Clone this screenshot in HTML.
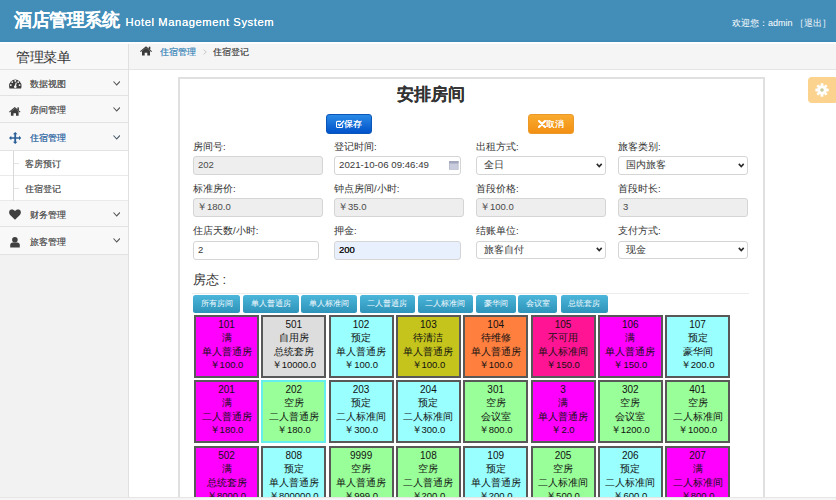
<!DOCTYPE html>
<html><head><meta charset="utf-8">
<style>
*{box-sizing:border-box;margin:0;padding:0}
html,body{width:836px;height:500px;overflow:hidden;background:#fff;font-family:"Liberation Sans",sans-serif;color:#393939}
body div,body span{text-shadow:0 0 0.35px currentColor}
.a{position:absolute;white-space:nowrap}
.hdr{position:absolute;left:0;top:0;width:836px;height:42px;background:#438eb9;color:#fff}
.hdr .t1{position:absolute;left:14px;top:8.6px;font-size:17.5px;letter-spacing:-0.45px;font-weight:bold;line-height:22px}
.hdr .t2{position:absolute;left:125.5px;top:14px;font-size:11.2px;letter-spacing:0.6px;line-height:16px;text-shadow:0 0 0.6px #fff}
.hdr .r{position:absolute;left:732px;top:16.8px;font-size:9px;line-height:12px;text-shadow:none}
.side{position:absolute;left:0;top:42px;width:129px;height:458px;background:#f2f2f2;border-right:1px solid #e0e0e0}
.mtitle{position:absolute;left:0;top:42px;width:128px;height:28px;background:#f8f8f8;border-bottom:1px solid #e2e2e2;font-size:13.5px;letter-spacing:-0.4px;color:#333;line-height:18px;padding-left:16px;padding-top:6.5px;text-shadow:none}
.mi{position:absolute;left:0;width:128px;background:#f8f8f8;border-bottom:1px solid #e2e2e2}
.tx{position:absolute;font-size:9.3px;letter-spacing:0px;line-height:12px;color:#585858;white-space:nowrap}
.ic{position:absolute}
.sub{position:absolute;left:0;width:128px;background:#fff;border-bottom:1px solid #eaeaea}
.bc{position:absolute;left:129px;top:42px;width:707px;height:28px;background:#f5f5f5;border-bottom:1px solid #e5e5e5;font-size:9px;color:#555}
.panel{position:absolute;left:178px;top:77px;width:587px;height:440px;border:2px solid #e0e0e0;background:#fff}
.title{position:absolute;left:397px;top:83px;font-size:16.5px;font-weight:bold;color:#333;line-height:22px}
.btn{position:absolute;height:20px;border-radius:3px;color:#fff;font-size:9.4px;line-height:17px;text-align:center}
.save{left:326px;top:113.5px;width:46px;background:linear-gradient(#2a8ae6,#0052c9);border:1px solid #0a56b8}
.cancel{left:528px;top:113.5px;width:46px;background:linear-gradient(#f9ab2f,#f29014);border:1px solid #eb9a2a}
.lbl{position:absolute;font-size:9.5px;color:#333;line-height:12px;text-shadow:none}
.inp{position:absolute;height:18.5px;border:1px solid #d5d5d5;border-radius:3px;background:#fff;font-size:9.5px;color:#393939;line-height:16.5px;padding-left:4px;text-shadow:none}
.ro{background:#eeeeee;color:#4a4a4a}
.fs{position:absolute;left:193px;top:271px;font-size:13px;color:#333;line-height:17px;text-shadow:none}
.hr{position:absolute;left:192px;top:293px;width:557px;height:1px;background:#ececec}
.fb{position:absolute;top:295.4px;height:17.2px;border-radius:2.5px;background:linear-gradient(#4cb6db,#2e93b8);color:#f4fbff;font-size:8.1px;line-height:17px;text-align:center;text-shadow:none}
.card{position:absolute;width:65px;height:63px;border:2px solid #585858;text-align:center;font-size:9.5px;line-height:13.5px;color:#111;padding-top:0.95px}
.card div{text-shadow:none}
.card div:first-child{font-size:10px}

.botbar{position:absolute;left:0;top:496.5px;width:836px;height:4px;background:linear-gradient(#f3f3f3,#fafafa);border-top:1px solid #e6e6e6}
.gear{position:absolute;left:808px;top:77px;width:30px;height:26px;border-radius:4px;background:#fbd28e}
</style></head><body>
<div class="hdr">
  <div class="t1">酒店管理系统</div>
  <div class="t2">Hotel Management System</div>
  <div class="r">欢迎您：admin ［退出］</div>
</div>
<div class="side"></div>
<div class="mtitle">管理菜单</div>
<div class="mi" style="top:70px;height:26px"></div>
<svg class="ic" style="left:8.8px;top:79.4px" width="13" height="10" viewBox="0 0 13 10"><path d="M0.5 9.4C0.2 8.6 0.1 7.6 0.1 6.8A6.2 6.2 0 0 1 12.5 6.8C12.5 7.6 12.4 8.6 12.1 9.4Z" fill="#3c3c3c"/><g fill="#f8f8f8"><circle cx="6.3" cy="1.9" r="0.95"/><circle cx="3.2" cy="3.1" r="0.95"/><circle cx="9.2" cy="3.1" r="0.95"/><circle cx="1.8" cy="6.1" r="0.95"/><circle cx="10.6" cy="6.1" r="0.95"/><circle cx="6.3" cy="7.8" r="1.35"/></g><path d="M6.1 7.8L7.3 3.6" stroke="#f8f8f8" stroke-width="1.2"/></svg>
<div class="tx" style="left:30px;top:77.5px">数据视图</div>
<svg class="ic" style="left:112.8px;top:80.6px" width="7.5" height="5" viewBox="0 0 7.5 5"><path d="M0.5 0.5L3.7 4L7 0.5" fill="none" stroke="#555" stroke-width="1.1"/></svg>

<div class="mi" style="top:96px;height:27px"></div>
<svg class="ic" style="left:9px;top:106.6px" width="11.5" height="9" viewBox="0 0 11.5 9"><path d="M0 4.7L5.75 0L11.5 4.7L10.8 5.5L5.75 1.4L0.7 5.5Z" fill="#3c3c3c"/><rect x="8.4" y="0.4" width="1.5" height="2.6" fill="#3c3c3c"/><path d="M1.9 4.5L5.75 1.4L9.6 4.5V8.8H7V6.2H4.5V8.8H1.9Z" fill="#3c3c3c"/></svg>
<div class="tx" style="left:30px;top:104px">房间管理</div>
<svg class="ic" style="left:112.8px;top:107.4px" width="7.5" height="5" viewBox="0 0 7.5 5"><path d="M0.5 0.5L3.7 4L7 0.5" fill="none" stroke="#555" stroke-width="1.1"/></svg>

<div class="mi" style="top:123px;height:28px"></div>
<svg class="ic" style="left:8.8px;top:132px" width="12.4" height="12" viewBox="0 0 12.4 12"><path d="M6.2 0L3.9 2.3H5.3V5.2H2.3V3.8L0 6L2.3 8.2V6.8H5.3V9.7H3.9L6.2 12L8.5 9.7H7.1V6.8H10.1V8.2L12.4 6L10.1 3.8V5.2H7.1V2.3H8.5Z" fill="#2a5f98"/></svg>
<div class="tx" style="left:30px;top:131.5px;color:#3a6ea5">住宿管理</div>
<svg class="ic" style="left:112.8px;top:134.6px" width="7.5" height="5" viewBox="0 0 7.5 5"><path d="M0.5 0.5L3.7 4L7 0.5" fill="none" stroke="#4a5a6a" stroke-width="1.1"/></svg>

<div class="sub" style="top:151px;height:25px"></div>
<div class="sub" style="top:176px;height:25px"></div>
<div class="a" style="left:12.5px;top:151px;width:1px;height:50px;background:#d8d8d8"></div>
<div class="a" style="left:14px;top:163px;width:4.5px;height:1px;background:#e2e2e2"></div>
<div class="a" style="left:14px;top:187.5px;width:4.5px;height:1px;background:#e2e2e2"></div>
<div class="tx" style="left:25px;top:158px;color:#5e5e5e">客房预订</div>
<div class="tx" style="left:25px;top:182.5px;color:#5e5e5e">住宿登记</div>

<div class="mi" style="top:201px;height:26px"></div>
<svg class="ic" style="left:9px;top:209.4px" width="12" height="11" viewBox="0 0 12 11"><path d="M6 10.7L1.1 5.9C-0.5 4.3 -0.1 1.3 2 0.6C3.6 0 5 0.7 6 1.9C7 0.7 8.4 0 10 0.6C12.1 1.3 12.5 4.3 10.9 5.9Z" fill="#404040"/></svg>
<div class="tx" style="left:30px;top:208.5px">财务管理</div>
<svg class="ic" style="left:112.8px;top:211.5px" width="7.5" height="5" viewBox="0 0 7.5 5"><path d="M0.5 0.5L3.7 4L7 0.5" fill="none" stroke="#555" stroke-width="1.1"/></svg>

<div class="mi" style="top:227px;height:28px"></div>
<svg class="ic" style="left:10px;top:236.6px" width="10" height="11" viewBox="0 0 10 11"><circle cx="4.9" cy="2.8" r="2.8" fill="#404040"/><path d="M0.2 10.6V8C0.2 6.4 1.3 5.5 2.6 5.5H7.4C8.7 5.5 9.8 6.4 9.8 8V10.6Z" fill="#404040"/></svg>
<div class="tx" style="left:30px;top:235.5px">旅客管理</div>
<svg class="ic" style="left:112.8px;top:238.4px" width="7.5" height="5" viewBox="0 0 7.5 5"><path d="M0.5 0.5L3.7 4L7 0.5" fill="none" stroke="#555" stroke-width="1.1"/></svg>

<div class="bc">
  <svg style="position:absolute;left:11px;top:4.2px" width="12" height="10" viewBox="0 0 11.5 9"><path d="M0 4.7L5.75 0L11.5 4.7L10.8 5.5L5.75 1.4L0.7 5.5Z" fill="#3a3a3a"/><rect x="8.4" y="0.4" width="1.5" height="2.6" fill="#3a3a3a"/><path d="M1.9 4.5L5.75 1.4L9.6 4.5V8.8H7V6.2H4.5V8.8H1.9Z" fill="#3a3a3a"/></svg>
  <div class="a" style="left:31px;top:4px;line-height:12px;color:#4c8fbd">住宿管理</div>
  <svg style="position:absolute;left:74px;top:6.5px" width="4" height="6" viewBox="0 0 4 6"><path d="M0.6 0.5L3.2 3L0.6 5.5" fill="none" stroke="#c8c8c8" stroke-width="1"/></svg>
  <div class="a" style="left:84px;top:4px;line-height:12px;color:#555">住宿登记</div>
</div>
<div class="panel"></div>
<div class="title">安排房间</div>
<div class="btn save"><svg style="position:absolute;left:8.5px;top:5.2px" width="9" height="8.5" viewBox="0 0 9 8.5"><path d="M6.6 4.6V6.4C6.6 7 6.1 7.5 5.5 7.5H1.6C1 7.5 0.5 7 0.5 6.4V2.5C0.5 1.9 1 1.4 1.6 1.4H5" fill="none" stroke="#fff" stroke-width="1.1"/><path d="M1.9 3.9L3.5 5.5L8.2 0.8" fill="none" stroke="#fff" stroke-width="1.4"/></svg><span style="position:absolute;left:17px;top:0">保存</span></div>
<div class="btn cancel"><svg style="position:absolute;left:8.5px;top:5.5px" width="8" height="8" viewBox="0 0 8 8"><path d="M1 1L7 7M7 1L1 7" stroke="#fff" stroke-width="2.1" stroke-linecap="round"/></svg><span style="position:absolute;left:16.8px;top:0">取消</span></div>

<div class="lbl" style="left:193px;top:141px">房间号:</div>
<div class="lbl" style="left:334px;top:141px">登记时间:</div>
<div class="lbl" style="left:476px;top:141px">出租方式:</div>
<div class="lbl" style="left:618px;top:141px">旅客类别:</div>
<div class="inp ro" style="left:193px;top:156px;width:130px">202</div>
<div class="inp" style="left:334px;top:156px;width:127px;font-size:9.7px">2021-10-06 09:46:49<svg style="position:absolute;left:114px;top:3.7px" width="10" height="9" viewBox="0 0 10 9"><rect x="0" y="0" width="9.6" height="8.8" fill="#b9bdd0"/><rect x="0" y="0" width="9.6" height="2.2" fill="#a3a7bd"/><rect x="1" y="3" width="7.6" height="5" fill="#c9ccdc"/></svg></div>
<div class="inp sel" style="left:476px;top:156px;width:130px;padding-left:7px">全日<svg style="position:absolute;right:2.5px;top:5.8px" width="6.5" height="5" viewBox="0 0 6.5 5"><path d="M0.8 0.9L3.25 3.5L5.7 0.9" fill="none" stroke="#2a2a2a" stroke-width="1.6"/></svg></div>
<div class="inp sel" style="left:618px;top:156px;width:130px;padding-left:7px">国内旅客<svg style="position:absolute;right:2.5px;top:5.8px" width="6.5" height="5" viewBox="0 0 6.5 5"><path d="M0.8 0.9L3.25 3.5L5.7 0.9" fill="none" stroke="#2a2a2a" stroke-width="1.6"/></svg></div>

<div class="lbl" style="left:193px;top:183px">标准房价:</div>
<div class="lbl" style="left:334px;top:183px">钟点房间/小时:</div>
<div class="lbl" style="left:476px;top:183px">首段价格:</div>
<div class="lbl" style="left:618px;top:183px">首段时长:</div>
<div class="inp ro" style="left:193px;top:198px;width:130px;padding-left:3px">￥180.0</div>
<div class="inp ro" style="left:334px;top:198px;width:130px;padding-left:3px">￥35.0</div>
<div class="inp ro" style="left:476px;top:198px;width:130px;padding-left:3px">￥100.0</div>
<div class="inp ro" style="left:618px;top:198px;width:130px">3</div>

<div class="lbl" style="left:193px;top:225px">住店天数/小时:</div>
<div class="lbl" style="left:334px;top:225px">押金:</div>
<div class="lbl" style="left:476px;top:225px">结账单位:</div>
<div class="lbl" style="left:618px;top:225px">支付方式:</div>
<div class="inp" style="left:193px;top:241px;width:126px">2</div>
<div class="inp" style="left:334px;top:241px;width:127px;background:#e8f0fe;color:#1a1a1a;text-shadow:0 0 0.4px #1a1a1a">200</div>
<div class="inp sel" style="left:476px;top:240.5px;width:130px;padding-left:7px">旅客自付<svg style="position:absolute;right:2.5px;top:5.8px" width="6.5" height="5" viewBox="0 0 6.5 5"><path d="M0.8 0.9L3.25 3.5L5.7 0.9" fill="none" stroke="#2a2a2a" stroke-width="1.6"/></svg></div>
<div class="inp sel" style="left:618px;top:240.5px;width:130px;padding-left:7px">现金<svg style="position:absolute;right:2.5px;top:5.8px" width="6.5" height="5" viewBox="0 0 6.5 5"><path d="M0.8 0.9L3.25 3.5L5.7 0.9" fill="none" stroke="#2a2a2a" stroke-width="1.6"/></svg></div>

<div class="fs">房态<span style="margin-left:3.5px;text-shadow:none">:</span></div>
<div class="hr"></div>
<div class="fb" style="left:193px;width:47px">所有房间</div>
<div class="fb" style="left:243px;width:55.6px">单人普通房</div>
<div class="fb" style="left:301.4px;width:55.2px">单人标准间</div>
<div class="fb" style="left:359.5px;width:55px">二人普通房</div>
<div class="fb" style="left:417.9px;width:55px">二人标准间</div>
<div class="fb" style="left:476px;width:39.5px">豪华间</div>
<div class="fb" style="left:518.3px;width:39px">会议室</div>
<div class="fb" style="left:560.5px;width:47px">总统套房</div>

<div class="card" style="left:194.0px;top:315.0px;background:#ff00ff"><div>101</div><div>满</div><div>单人普通房</div><div>￥100.0</div></div>
<div class="card" style="left:261.3px;top:315.0px;background:#dddddd"><div>501</div><div>自用房</div><div>总统套房</div><div>￥10000.0</div></div>
<div class="card" style="left:328.6px;top:315.0px;background:#99ffff"><div>102</div><div>预定</div><div>单人普通房</div><div>￥100.0</div></div>
<div class="card" style="left:395.9px;top:315.0px;background:#c4c41c"><div>103</div><div>待清洁</div><div>单人普通房</div><div>￥100.0</div></div>
<div class="card" style="left:463.2px;top:315.0px;background:#ff7f3f"><div>104</div><div>待维修</div><div>单人普通房</div><div>￥100.0</div></div>
<div class="card" style="left:530.5px;top:315.0px;background:#ff1493"><div>105</div><div>不可用</div><div>单人标准间</div><div>￥150.0</div></div>
<div class="card" style="left:597.8px;top:315.0px;background:#ff00ff"><div>106</div><div>满</div><div>单人普通房</div><div>￥150.0</div></div>
<div class="card" style="left:665.1px;top:315.0px;background:#99ffff"><div>107</div><div>预定</div><div>豪华间</div><div>￥200.0</div></div>
<div class="card" style="left:194.0px;top:380.0px;background:#ff00ff"><div>201</div><div>满</div><div>二人普通房</div><div>￥180.0</div></div>
<div class="card" style="left:261.3px;top:380.0px;background:#99ff99;border-color:#66eeee"><div>202</div><div>空房</div><div>二人普通房</div><div>￥180.0</div></div>
<div class="card" style="left:328.6px;top:380.0px;background:#99ffff"><div>203</div><div>预定</div><div>二人标准间</div><div>￥300.0</div></div>
<div class="card" style="left:395.9px;top:380.0px;background:#99ffff"><div>204</div><div>预定</div><div>二人标准间</div><div>￥300.0</div></div>
<div class="card" style="left:463.2px;top:380.0px;background:#99ff99"><div>301</div><div>空房</div><div>会议室</div><div>￥800.0</div></div>
<div class="card" style="left:530.5px;top:380.0px;background:#ff00ff"><div>3</div><div>满</div><div>单人普通房</div><div>￥2.0</div></div>
<div class="card" style="left:597.8px;top:380.0px;background:#99ff99"><div>302</div><div>空房</div><div>会议室</div><div>￥1200.0</div></div>
<div class="card" style="left:665.1px;top:380.0px;background:#99ff99"><div>401</div><div>空房</div><div>二人标准间</div><div>￥1000.0</div></div>
<div class="card" style="left:194.0px;top:446.0px;background:#ff00ff"><div>502</div><div>满</div><div>总统套房</div><div>￥8000.0</div></div>
<div class="card" style="left:261.3px;top:446.0px;background:#99ffff"><div>808</div><div>预定</div><div>单人普通房</div><div>￥800000.0</div></div>
<div class="card" style="left:328.6px;top:446.0px;background:#99ff99"><div>9999</div><div>空房</div><div>单人普通房</div><div>￥999.0</div></div>
<div class="card" style="left:395.9px;top:446.0px;background:#99ff99"><div>108</div><div>空房</div><div>二人普通房</div><div>￥200.0</div></div>
<div class="card" style="left:463.2px;top:446.0px;background:#99ffff"><div>109</div><div>预定</div><div>单人普通房</div><div>￥200.0</div></div>
<div class="card" style="left:530.5px;top:446.0px;background:#99ff99"><div>205</div><div>空房</div><div>二人标准间</div><div>￥500.0</div></div>
<div class="card" style="left:597.8px;top:446.0px;background:#99ffff"><div>206</div><div>预定</div><div>二人标准间</div><div>￥600.0</div></div>
<div class="card" style="left:665.1px;top:446.0px;background:#ff00ff"><div>207</div><div>满</div><div>二人标准间</div><div>￥800.0</div></div>

<div class="gear">
  <svg style="position:absolute;left:7px;top:6px" width="14" height="14" viewBox="0 0 14 14"><g fill="#fff"><circle cx="7" cy="7" r="4.6"/><rect x="5.6" y="0.3" width="2.8" height="13.4" rx="0.5"/><rect x="5.6" y="0.3" width="2.8" height="13.4" rx="0.5" transform="rotate(45 7 7)"/><rect x="5.6" y="0.3" width="2.8" height="13.4" rx="0.5" transform="rotate(90 7 7)"/><rect x="5.6" y="0.3" width="2.8" height="13.4" rx="0.5" transform="rotate(135 7 7)"/></g><circle cx="7" cy="7" r="1.8" fill="#c8c89a"/></svg>
</div>
<div class="botbar"></div>
<div class="a" style="left:0;top:40px;width:836px;height:2px;background:#3f8ab6"></div>
<div class="a" style="left:0;top:42px;width:836px;height:1.5px;background:#fdfdff"></div>
</body></html>
